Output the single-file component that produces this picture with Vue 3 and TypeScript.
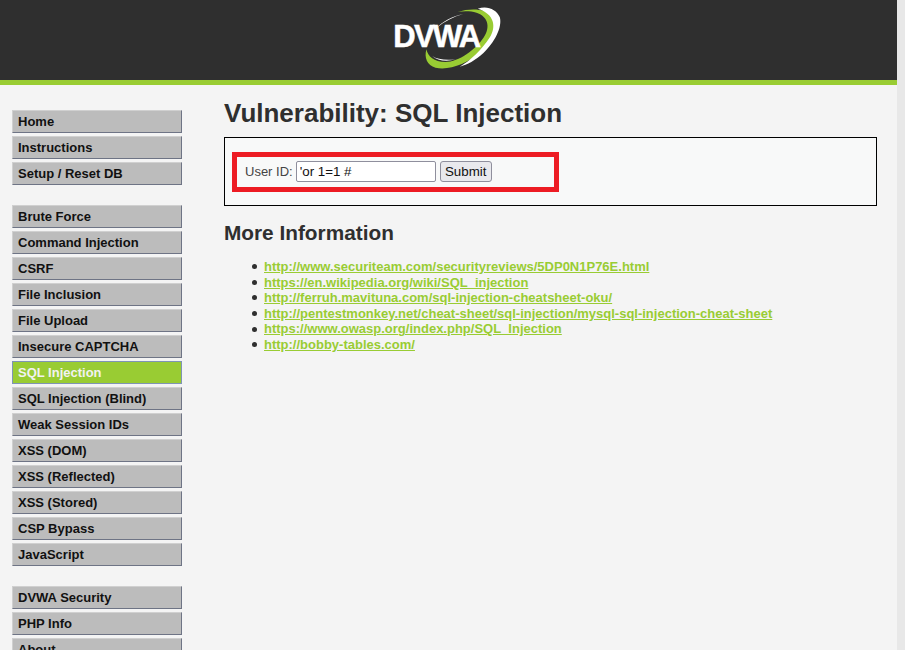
<script setup lang="ts">
const groups: string[][] = [
  ['Home', 'Instructions', 'Setup / Reset DB'],
  [
    'Brute Force',
    'Command Injection',
    'CSRF',
    'File Inclusion',
    'File Upload',
    'Insecure CAPTCHA',
    'SQL Injection',
    'SQL Injection (Blind)',
    'Weak Session IDs',
    'XSS (DOM)',
    'XSS (Reflected)',
    'XSS (Stored)',
    'CSP Bypass',
    'JavaScript'
  ],
  ['DVWA Security', 'PHP Info', 'About']
]

const links: string[] = [
  'http://www.securiteam.com/securityreviews/5DP0N1P76E.html',
  'https://en.wikipedia.org/wiki/SQL_injection',
  'http://ferruh.mavituna.com/sql-injection-cheatsheet-oku/',
  'http://pentestmonkey.net/cheat-sheet/sql-injection/mysql-sql-injection-cheat-sheet',
  'https://www.owasp.org/index.php/SQL_Injection',
  'http://bobby-tables.com/'
]
</script>

<template>
  <div class="window">
    <div class="page">
      <header class="header">
        <svg class="logo" viewBox="10.5 0 450 240" width="150" height="80">
          <path fill="#99cc33" d="M262 36 C300 24 345 26 368 48 C392 74 368 120 330 156 C290 192 235 212 195 203 C170 197 160 172 168 148 C172 170 190 186 225 186 C265 186 315 150 340 112 C362 78 350 48 318 38 C300 33 280 33 262 36 Z" />
          <path fill="#ffffff" d="M322 26 C350 16 378 28 388 52 C396 82 372 128 338 160 C315 181 290 195 268 200 C300 182 335 148 358 112 C378 80 372 42 322 26 Z" />
          <path fill="#ffffff" d="M278 42 C245 48 215 66 198 84 C222 64 250 50 278 42 Z" />
          <path fill="#ffffff" d="M185 168 C200 178 225 182 256 178 C228 186 200 182 185 168 Z" />
          <text class="logo-text" x="68" y="142">DVWA</text>
        </svg>
      </header>

      <div class="body">
        <nav class="menu">
          <ul v-for="(group, i) in groups" :key="i" class="menu-group">
            <li
              v-for="item in group"
              :key="item"
              class="menu-item"
              :class="{ selected: item === 'SQL Injection' }"
            >
              {{ item }}
            </li>
          </ul>
        </nav>

        <main class="content">
          <h1>Vulnerability: SQL Injection</h1>

          <div class="vulnerable-code">
            <form class="user-form" @submit.prevent>
              <label for="uid">User ID:</label>
              <input id="uid" type="text" value="'or 1=1 #" />
              <button type="submit">Submit</button>
            </form>
          </div>

          <h2>More Information</h2>
          <ul class="links">
            <li v-for="link in links" :key="link">
              <a :href="link" @click.prevent>{{ link }}</a>
            </li>
          </ul>
        </main>
      </div>
    </div>
    <div class="scrollbar"></div>
  </div>
</template>

<style>
html,
body {
  margin: 0;
  overflow: hidden;
}
</style>

<style scoped>
* {
  box-sizing: border-box;
}

.window {
  display: flex;
  height: 650px;
  overflow: hidden;
  font-family: 'Liberation Sans', Arial, sans-serif;
  font-size: 13px;
  line-height: 15.6px;
  color: #2f2f2f;
  background: #f4f4f4;
}

.page {
  flex: 1;
  min-width: 0;
}

.scrollbar {
  width: 8px;
  background: #e8e8e8;
}

.header {
  display: flex;
  justify-content: center;
  height: 85px;
  background: #2f2f2f;
  border-bottom: 5px solid #99cc33;
}

.logo {
  display: block;
}

.logo-text {
  font-family: 'Liberation Sans', Arial, sans-serif;
  font-size: 93px;
  font-weight: 700;
  letter-spacing: -5px;
  fill: #ffffff;
  stroke: #ffffff;
  stroke-width: 1.5px;
}

.body {
  display: flex;
  align-items: flex-start;
}

.menu {
  width: 170px;
  margin: 25px 0 0 12px;
  flex-shrink: 0;
}

.menu-group {
  list-style: none;
  margin: 0 0 20px;
  padding: 0;
}

.menu-item {
  height: 23px;
  margin-bottom: 3px;
  padding: 1px 5px 0;
  line-height: 19px;
  font-weight: 700;
  color: #111111;
  background: #bcbcbc;
  border-top: 1px solid #d0d0d0;
  border-right: 1px solid #6e7485;
  border-bottom: 1px solid #6e7485;
  border-left: 1px solid #d0d0d0;
}

.menu-item.selected {
  color: #f2f2f2;
  background: #99cc33;
  border: 1px solid #7f94b5;
}

.content {
  flex: 1;
  min-width: 0;
  margin: 0 20px 0 42px;
  padding-top: 13px;
}

h1 {
  margin: 0 0 8px;
  font-size: 26px;
  line-height: 31px;
  font-weight: 700;
  color: #2f2f2f;
}

h2 {
  margin: 14px 0 0;
  font-size: 20.8px;
  line-height: 25px;
  font-weight: 700;
  color: #2f2f2f;
}

.vulnerable-code {
  height: 69px;
  padding: 14px 7px;
  background: #f8f9f9;
  border: 1px solid #000000;
}

.user-form {
  display: flex;
  align-items: center;
  width: 327px;
  height: 40px;
  padding: 0 0 1px 8px;
  border: 5px solid #ed1c24;
}

.user-form label {
  margin-right: 3px;
  color: #444444;
}

.user-form input {
  width: 140px;
  height: 21px;
  margin: 0 4px 0 0;
  padding: 1px 3px;
  font: 13.33px 'Liberation Sans', Arial, sans-serif;
  color: #111111;
  background: #ffffff;
  border: 1px solid #8f8f9d;
  border-radius: 2px;
}

.user-form button {
  width: 52px;
  height: 21px;
  padding: 0;
  font: 13.33px 'Liberation Sans', Arial, sans-serif;
  color: #111111;
  background: #e9e9ed;
  border: 1px solid #8f8f9d;
  border-radius: 3px;
}

.links {
  list-style: none;
  margin: 14px 0 0;
  padding-left: 28px;
}

.links li {
  display: flex;
  align-items: center;
  gap: 7px;
}

.links li::before {
  content: '';
  flex-shrink: 0;
  width: 5px;
  height: 5px;
  border-radius: 50%;
  background: #2f2f2f;
}

.links a {
  font-weight: 700;
  color: #99cc33;
  text-decoration: underline;
}
</style>
